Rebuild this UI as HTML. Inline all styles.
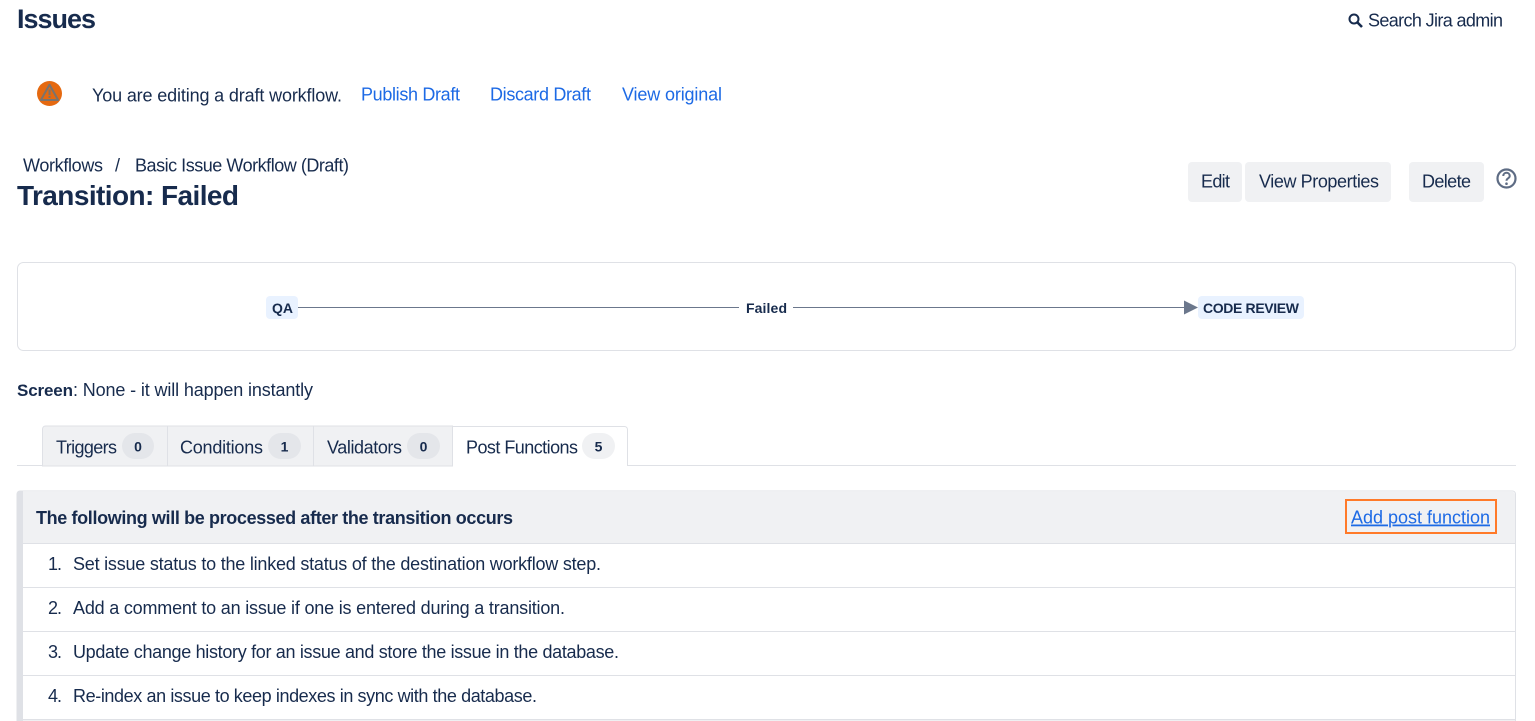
<!DOCTYPE html>
<html lang="en">
<head>
<meta charset="utf-8">
<title>Transition: Failed</title>
<style>
html,body{margin:0;padding:0;width:1535px;height:721px;overflow:hidden;background:#fff}
svg{display:block;position:absolute;left:0;top:0}
text{font-family:"Liberation Sans",Arial,sans-serif;font-size:18px;fill:#172b4d;white-space:pre}
.b{font-weight:700}
.l{fill:#1d6ae5}
.n{font-size:14px;font-weight:700;text-anchor:middle}
a{cursor:pointer}
</style>
</head>
<body>
<svg width="1535" height="721" viewBox="0 0 1535 721" xmlns="http://www.w3.org/2000/svg">
  <!-- Header -->
  <text class="b" x="17" y="28" style="font-size:27px" textLength="79">Issues</text>
  <g fill="none" stroke="#172b4d">
    <circle cx="1354" cy="19" r="4.500" stroke-width="2"/>
    <path d="M1357.500 22.500l4.500 4.500" stroke-width="2.600"/>
  </g>
  <text x="1368" y="26.500" textLength="135">Search Jira admin</text>

  <!-- Draft notice -->
  <circle cx="49.500" cy="93.500" r="12.500" fill="#e56910"/>
  <path d="M49.500 84.800l8.600 15.200h-17.200z" fill="none" stroke="#7b736c" stroke-width="2" stroke-linejoin="round"/>
  <path d="M49.500 89.500v5.500M49.500 96v2" stroke="#7b736c" stroke-width="2"/>
  <text x="92" y="101.500" textLength="250">You are editing a draft workflow.</text>
  <a href="#"><text class="l" x="361" y="100.500" textLength="99">Publish Draft</text></a>
  <a href="#"><text class="l" x="490" y="100.500" textLength="101">Discard Draft</text></a>
  <a href="#"><text class="l" x="622" y="100.500" textLength="100">View original</text></a>

  <!-- Breadcrumb and title -->
  <text x="23" y="171.500" textLength="80">Workflows</text>
  <text x="115" y="171.500" textLength="7">/</text>
  <text x="135" y="171.500" textLength="214">Basic Issue Workflow (Draft)</text>
  <text class="b" x="17" y="205" style="font-size:28px" textLength="222">Transition: Failed</text>

  <!-- Actions -->
  <rect x="1188" y="162" width="54" height="40" rx="4" fill="#f0f1f3"/>
  <rect x="1245" y="162" width="146" height="40" rx="4" fill="#f0f1f3"/>
  <rect x="1409" y="162" width="75" height="40" rx="4" fill="#f0f1f3"/>
  <text x="1201" y="187.500" textLength="29">Edit</text>
  <text x="1259" y="187.500" textLength="120">View Properties</text>
  <text x="1422" y="187.500" textLength="49">Delete</text>
  <circle cx="1506.500" cy="178.500" r="9" fill="none" stroke="#5e6c84" stroke-width="2.200"/>
  <path d="M1503.300 176c0-4.300 6.400-4.300 6.400 0 0 2.400-3.200 2.300-3.200 4.700" fill="none" stroke="#5e6c84" stroke-width="2"/>
  <circle cx="1506.500" cy="183.700" r="1.300" fill="#5e6c84"/>

  <!-- Transition diagram -->
  <rect x="17.500" y="262.500" width="1498" height="88" rx="6" fill="#fff" stroke="#dfe1e6"/>
  <rect x="266" y="296" width="32" height="23" rx="4" fill="#e9f2ff"/>
  <text class="b" x="272" y="313" style="font-size:14px" textLength="21">QA</text>
  <path d="M298 307.500H739M793 307.500H1185" stroke="#6b778c" stroke-width="1"/>
  <path d="M1184 300.500l14 7-14 7z" fill="#6b778c"/>
  <text class="b" x="746" y="313" style="font-size:14px" textLength="41">Failed</text>
  <rect x="1198" y="296" width="106" height="23" rx="4" fill="#e9f2ff"/>
  <text class="b" x="1203" y="313" style="font-size:14px" textLength="96">CODE REVIEW</text>

  <!-- Screen -->
  <text class="b" x="17" y="396" style="font-size:17px" textLength="56">Screen</text>
  <text x="73" y="396" textLength="240">: None - it will happen instantly</text>

  <!-- Tabs -->
  <path d="M17 465.500H1516" stroke="#dfe1e6"/>
  <path d="M42.500 466V429a3 3 0 0 1 3-3H452.500V466z" fill="#f0f1f3" stroke="#dfe1e6"/>
  <path d="M167.500 426V466M313.500 426V466" stroke="#dfe1e6"/>
  <path d="M452.500 466V426.500H624.500a3 3 0 0 1 3 3V466" fill="#fff" stroke="#dfe1e6"/>
  <path d="M453 465.500H627" stroke="#fff"/>
  <text x="56" y="453.500" textLength="61">Triggers</text>
  <rect x="122" y="433" width="32" height="26" rx="13" fill="#e4e6ea"/>
  <text class="n" x="138" y="451.500">0</text>
  <text x="180" y="453.500" textLength="83">Conditions</text>
  <rect x="268" y="433" width="33" height="26" rx="13" fill="#e4e6ea"/>
  <text class="n" x="284.500" y="451.500">1</text>
  <text x="327" y="453.500" textLength="75">Validators</text>
  <rect x="407" y="433" width="33" height="26" rx="13" fill="#e4e6ea"/>
  <text class="n" x="423.500" y="451.500">0</text>
  <text x="466" y="453.500" textLength="112">Post Functions</text>
  <rect x="582" y="433" width="33" height="26" rx="13" fill="#f0f1f3"/>
  <text class="n" x="598.500" y="451.500">5</text>

  <!-- Post functions panel -->
  <path d="M1515.500 721V494a3 3 0 0 0-3-3H20a3 3 0 0 0-3 3V721z" fill="#fff" stroke="#dfe1e6"/>
  <path d="M23 492H1512.500a2.500 2.500 0 0 1 2.500 2.500V543H23z" fill="#f0f1f3"/>
  <path d="M23 543.500H1516M23 587.500H1516M23 631.500H1516M23 675.500H1516M23 719.500H1516" stroke="#dfe1e6"/>
  <path d="M23 491H20a3 3 0 0 0-3 3V721H23z" fill="#dfe1e6"/>
  <text class="b" x="36" y="524" style="font-size:18px" textLength="477">The following will be processed after the transition occurs</text>
  <rect x="1346" y="500" width="150" height="33" fill="none" stroke="#ff7a29" stroke-width="2"/>
  <a href="#"><text class="l" x="1351" y="523.500" textLength="139" text-decoration="underline">Add post function</text></a>

  <text x="48" y="570" textLength="14">1.</text>
  <text x="73" y="570" textLength="528">Set issue status to the linked status of the destination workflow step.</text>
  <text x="48" y="614" textLength="14">2.</text>
  <text x="73" y="614" textLength="492">Add a comment to an issue if one is entered during a transition.</text>
  <text x="48" y="658" textLength="14">3.</text>
  <text x="73" y="658" textLength="546">Update change history for an issue and store the issue in the database.</text>
  <text x="48" y="702" textLength="14">4.</text>
  <text x="73" y="702" textLength="464">Re-index an issue to keep indexes in sync with the database.</text>
</svg>
</body>
</html>
